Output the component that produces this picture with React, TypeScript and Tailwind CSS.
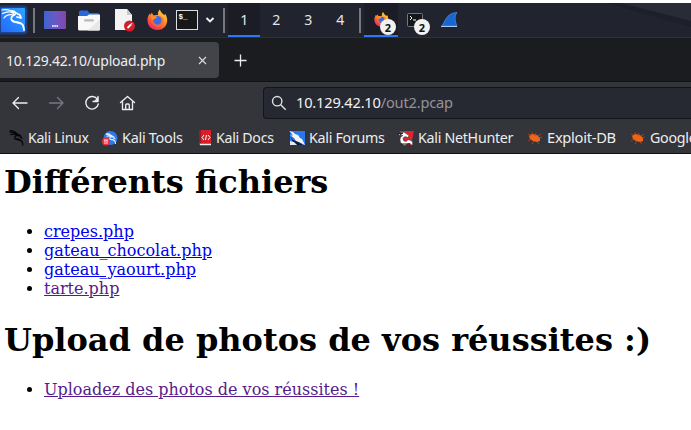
import React from "react";

type IconProps = { className?: string };

const dragonStrokes = (
  <>
    <path d="M2 3c5 0 9 1 12 4-4-1-7 0-10 1 4-2 8-1 11 1-3 1-5 4-3 6 3 2 8 0 11 4 2 2 2 4 2 7" />
    <path d="M3 1c5 0 9 1 12 5l5 3-4 1M20 9l3 4-3-1M14 15c5 0 7 1 9 4" />
  </>
);

function KaliMenu() {
  return (
    <svg className="h-[30px] w-[30px] shrink-0" viewBox="0 0 30 30">
      <defs>
        <linearGradient id="menuBlue" x1="0" y1="1" x2="1" y2="0">
          <stop stopColor="#2369ff" />
          <stop offset="1" stopColor="#2ba5ff" />
        </linearGradient>
      </defs>
      <rect x="-2" y="0" width="30" height="30" rx="4" fill="#1d58c8" opacity=".25" />
      <rect x="-1" y="1.5" width="28" height="27" rx="3" fill="#1d58c8" opacity=".5" />
      <rect x="1" y="3" width="24" height="24" rx="1" fill="url(#menuBlue)" />
      <g fill="none" stroke="#fff" strokeLinecap="round" strokeLinejoin="round">
        <path d="M2 5c5-1 9 0 12 3M2.500 8.500c4-2 8-2 11 0M4 13c2-3 6-4 10-3" strokeWidth="1.2" />
        <path d="M12 6c2 0 3 1 4 2l4 2 1 3-4-1M15 9.500c-3 1-5 4-3 6 3 3 8 1 10.500 4 1 2 1.500 3 1.500 5.500" strokeWidth="1.8" />
        <path d="M14 16.500c4 0 7 1 9 3.500" strokeWidth="1" />
      </g>
    </svg>
  );
}

function Desktop() {
  return (
    <svg className="h-[18px] w-[22px] shrink-0" viewBox="0 0 22 18">
      <defs>
        <linearGradient id="desk">
          <stop stopColor="#3f65cf" />
          <stop offset=".55" stopColor="#6b58c5" />
          <stop offset="1" stopColor="#8545a9" />
        </linearGradient>
      </defs>
      <rect width="22" height="18" rx=".7" fill="url(#desk)" />
      <path d="M8 15h1.7M10.2 15h1.7M12.4 15h1.7" stroke="#fff" strokeWidth="1.4" />
    </svg>
  );
}

function Folder() {
  return (
    <svg className="h-[21px] w-[22px] shrink-0" viewBox="0 0 22 21">
      <path d="M1 2q0-1.5 1.5-1.5h7L11.5 3H20q1 0 1 1v6H1z" fill="#286ad9" />
      <path d="M0 6h9l2-1.5h11V19q0 1.5-1.5 1.5h-19Q0 20.500 0 19z" fill="#f8f8f8" />
      <path d="M22 9v10q0 1.500-1.500 1.500H10z" fill="#e7e7e7" />
      <rect x="6" y="9.300" width="10" height="2.200" rx="1.100" fill="#b9b9b9" />
    </svg>
  );
}

function Editor() {
  return (
    <svg className="h-[24px] w-[22px] shrink-0" viewBox="0 0 22 24">
      <path d="M1 1h12l5 6v15H1z" fill="#f3f3f3" />
      <path d="M13 1v6h5z" fill="#c9c9c9" />
      <circle cx="15.500" cy="18" r="5.500" fill="#d51e29" />
      <path d="M13.500 20l3.500-3.500" stroke="#fff" strokeWidth="1.800" />
      <path d="M17.300 16.200l.8-.8" stroke="#fff" strokeWidth="1.300" />
    </svg>
  );
}

function Firefox({ className = "" }: IconProps) {
  return (
    <svg className={className} viewBox="0 0 22 22">
      <defs>
        <linearGradient id="flame" x1=".85" y1="0" x2=".2" y2="1">
          <stop stopColor="#ffe34a" />
          <stop offset=".4" stopColor="#ff9928" />
          <stop offset=".75" stopColor="#fc4740" />
          <stop offset="1" stopColor="#e22c6e" />
        </linearGradient>
      </defs>
      <path d="M13.500 0c.5 3 3 4 4.500 6l1-1.500c2 3 2.700 6.500 1.800 9.500C19.500 19 16 21.500 11 21.500 4.500 21.500.5 17 .5 11c0-3 1-5 2.500-7v2L5 3.500l2 3c2-.8 3-.8 4.500-.4-.4-2.500.3-4.500 2-6.100z" fill="url(#flame)" />
      <circle cx="10.800" cy="11.800" r="4.900" fill="#4b62df" />
      <path d="M3 7c3-2 5 0 8 1-1 2-4 1.500-4.500 3 1.500 4 6 3.500 8 1 1-2 0-4-1.200-5.500 4 1 5.500 5 3.700 8-2 4-7 5-10 2C4 14 4 10 3 7z" fill="#ff6c2e" opacity=".72" />
      <circle cx="11" cy="12" r="3.600" fill="#386de5" />
      <path d="M3 6c3-1 5 .500 8 2l-3 2-2 1z" fill="#ff8b27" />
    </svg>
  );
}

function Terminal({ className = "" }: IconProps) {
  return (
    <svg className={className} viewBox="0 0 22 20">
      <rect x=".5" y=".5" width="21" height="19" fill="#171819" stroke="#dedede" />
      <text x="2.500" y="8.500" fill="#fff" fontFamily="Liberation Mono, monospace" fontWeight="700" fontSize="7.500">$_</text>
    </svg>
  );
}

function SmallTerminal() {
  return (
    <svg className="absolute left-0 top-[10px] h-[14px] w-[16px]" viewBox="0 0 16 14">
      <rect x=".5" y=".5" width="15" height="13" rx="1" fill="#151619" stroke="#74767c" />
      <path d="M3 3l2 2-2 2M6 7h3" fill="none" stroke="#fff" />
    </svg>
  );
}

function Fin() {
  return (
    <svg className="ml-[10px] h-[16px] w-[17px] shrink-0" viewBox="0 0 17 16">
      <path d="M.5 14C4 12 4 1 16 .5c-3 4-2 9 0 13.500z" fill="#1766d2" stroke="#4b97e8" strokeWidth=".7" />
      <path d="M0 14.500h16" stroke="#a8c9ef" />
    </svg>
  );
}

function Badge({ className = "" }: IconProps) {
  return (
    <span className={`absolute top-[16px] flex h-4 w-4 items-center justify-center rounded-full bg-[#f1f1f1] text-[11px] leading-none font-bold text-[#111] ${className}`}>
      2
    </span>
  );
}

function Separator({ className = "" }: IconProps) {
  return <div className={`h-[25px] w-[2px] shrink-0 bg-[#77787c] ${className}`} />;
}

function Taskbar() {
  return (
    <div className="relative flex h-[34px] shrink-0 items-center bg-[#21232f]">
      <svg className="absolute right-0 top-0 h-[24px] w-[84px]" viewBox="0 0 84 24">
        <path d="M0 0h14l70 18v6z" fill="#1d1f29" />
        <path d="M14 0h70v18z" fill="#292b36" />
      </svg>
      <KaliMenu />
      <Separator className="ml-[3px]" />
      <div className="ml-[9px] flex"><Desktop /></div>
      <div className="ml-3 flex"><Folder /></div>
      <div className="ml-[14px] flex"><Editor /></div>
      <Firefox className="ml-[11px] h-[22px] w-[21px] shrink-0" />
      <Terminal className="ml-2 h-5 w-[22px] shrink-0" />
      <svg className="ml-[7px] h-[8px] w-[10px] shrink-0" viewBox="0 0 10 8">
        <path d="M1.500 2l3.500 3.500L8.500 2" fill="none" stroke="#f1f1f1" strokeWidth="1.900" />
      </svg>
      <Separator className="ml-2" />
      <div className="ml-[3px] flex h-full shrink-0 text-[15px] text-[#e5e5e9]">
        {["1", "2", "3", "4"].map((n, i) => (
          <div key={n} className={`flex w-8 items-center justify-center ${i === 0 ? "border-b-2 border-[#2878f7] bg-[#1b1c26]" : "pb-[2px]"}`}>
            <span className="inline-block scale-x-[0.94]">{n}</span>
          </div>
        ))}
      </div>
      <Separator className="ml-[3px]" />
      <div className="relative ml-[3px] h-full w-[34px] shrink-0 border-b-2 border-[#2878f7] bg-[#1b1c26]">
        <Firefox className="absolute left-[10px] top-[9px] h-[15px] w-[15px]" />
        <Badge className="left-4" />
      </div>
      <div className="relative ml-[9px] h-full w-[24px] shrink-0">
        <SmallTerminal />
        <Badge className="left-[7px]" />
      </div>
      <Fin />
    </div>
  );
}

function Tabs() {
  return (
    <div className="flex h-[44px] shrink-0 border-t border-[#303137] bg-[#1b1c20] pt-[4px]">
      <div className="flex h-9 w-[219px] items-center rounded-r bg-[#42444a] pl-[6px] text-[15px] text-[#ededee]">
        <span className="w-[160px] origin-left scale-x-[0.93] whitespace-nowrap tracking-[-0.2px]">10.129.42.10/upload.php</span>
        <svg className="ml-[32px] h-[9px] w-[9px]" viewBox="0 0 9 9">
          <path d="M1 1l7 7M8 1L1 8" stroke="#ddd" strokeWidth="1.100" />
        </svg>
      </div>
      <svg className="ml-[15px] mt-[12px] h-[13px] w-[13px]" viewBox="0 0 13 13">
        <path d="M6.500.5v12M.5 6.500h12" stroke="#ececec" strokeWidth="1.300" />
      </svg>
    </div>
  );
}

function AddressBar() {
  return (
    <div className="flex h-[42px] shrink-0 items-center border-t border-[#111217] bg-[#33353b]">
      <svg className="h-[18px] w-[140px] shrink-0" viewBox="0 0 140 18" fill="none" strokeLinecap="round" strokeLinejoin="round" strokeWidth="1.350">
        <path d="M27 9H13.500M18.500 3.500L13 9l5.500 5.500" stroke="#ededee" />
        <path d="M49.500 9H62.500M57.500 3.500L63 9l-5.500 5.500" stroke="#777980" />
        <path d="M97.500 5.500A6.300 6.300 0 1 0 98.300 10M98 2.500v5h-5" stroke="#ededee" />
        <path d="M94.500 7l3.500-3.500V7z" fill="#ededee" stroke="#ededee" strokeWidth=".6" />
        <path d="M120.500 8.500l7-6 7 6M122.500 7.500v8h10v-8M125.700 15v-4q0-1 1-1h1.600q1 0 1 1v4" stroke="#ededee" />
      </svg>
      <div className="ml-[123px] flex h-8 flex-1 items-center rounded-l border-y border-l border-[#14151b] bg-[#272932] pl-[7px] text-[15px]">
        <svg className="h-[16px] w-[16px]" viewBox="0 0 16 16" fill="none" stroke="#e2e2e5" strokeWidth="1.400">
          <circle cx="6.200" cy="6.200" r="4.700" /><path d="M9.700 9.700l5 5" />
        </svg>
        <span className="ml-[9px] origin-left scale-x-[0.975] whitespace-nowrap tracking-[-0.2px] text-[#f1f1f2]">10.129.42.10<span className="text-[#93949a]">/out2.pcap</span></span>
      </div>
    </div>
  );
}

type BookmarkKind = "linux" | "tools" | "docs" | "forums" | "hunter" | "exploit";

function BookmarkIcon({ kind }: { kind: BookmarkKind }) {
  if (kind === "linux") return (
    <svg className="h-4 w-4 shrink-0" viewBox="0 0 27 27" fill="none" stroke="#050607" strokeWidth="2.200">{dragonStrokes}</svg>
  );
  if (kind === "tools") return (
    <svg className="h-4 w-4 shrink-0" viewBox="0 0 16 16">
      <circle cx="8.500" cy="8" r="7" fill="#287af4" />
      <g transform="translate(3 3) scale(.42)" fill="none" stroke="#e5f2ff" strokeWidth="2.500">{dragonStrokes}</g>
      <circle cx="4" cy="11.500" r="4" fill="#ed303c" />
      <path d="M2 10h4M3 10v4M5 10v4" stroke="#fff" strokeWidth=".8" />
    </svg>
  );
  if (kind === "docs") return (
    <svg className="ml-px h-4 w-[13px] shrink-0" viewBox="0 0 13 16">
      <path d="M0 0h12v15H0z" fill="#d51f29" /><path d="M0 0h2v13H0z" fill="#991a27" /><path d="M1 14.500h11" stroke="#eee" strokeWidth="1.500" />
      <path d="M5 5L3 7.500 5 10M9 5l2 2.500L9 10M7.500 5l-1 5" fill="none" stroke="#fff" />
    </svg>
  );
  if (kind === "forums") return (
    <svg className="h-4 w-4 shrink-0" viewBox="0 0 16 16">
      <path d="M1 1h15v14H1z" fill="#2678f0" />
      <path d="M0 1l4 1 2 2 3 1 2 3 2 1 3 6-6-3-3-1-2-3-4-3 3 1-2-3 3 2z" fill="#f6f6f6" />
      <path d="M1 6l3 4 5 2 5 3H8l-4-3z" fill="#121827" />
      <path d="M1 11l4 1 3 3H1z" fill="#e3e9ef" />
    </svg>
  );
  if (kind === "hunter") return (
    <svg className="h-4 w-4 shrink-0" viewBox="0 0 16 16">
      <path d="M2 1h14L13 15H6z" fill="#df242e" />
      <path d="M0 5q4-5 8-1.500l3 2-1 2q-4-2-5 1 0 3 3 3 2-3 5-1 3 2 1 5-2-3-4-2l-3 2q-5-1-5-6 0-3 3-4z" fill="#fff" stroke="#282b33" strokeWidth=".5" />
      <path d="M0 4l5-1-3 2M3 14h9" stroke="#17191f" fill="none" />
    </svg>
  );
  return (
    <svg className="h-4 w-4 shrink-0" viewBox="0 0 16 16">
      <path d="M2 6q1-2 4-2l4 1 3 3v3l-3 1-4-1-3-2z" fill="#ef6418" />
      <path d="M1 4l3 2M5 2l1 3M9 3l-1 3M11 6l3-2M12 8l3-1M4 9l-3 2M7 11l-2 3M10 12l2 2" stroke="#b84a16" strokeWidth=".8" />
    </svg>
  );
}

const bookmarks: { label: string; kind: BookmarkKind; width: string; scale: string }[] = [
  { label: "Kali Linux", kind: "linux", width: "w-[94px]", scale: "scale-x-[0.94]" },
  { label: "Kali Tools", kind: "tools", width: "w-[96px]", scale: "scale-x-[0.965]" },
  { label: "Kali Docs", kind: "docs", width: "w-[91px]", scale: "scale-x-[0.945]" },
  { label: "Kali Forums", kind: "forums", width: "w-[109px]", scale: "scale-x-[0.95]" },
  { label: "Kali NetHunter", kind: "hunter", width: "w-[129px]", scale: "scale-x-[0.95]" },
  { label: "Exploit-DB", kind: "exploit", width: "w-[103px]", scale: "scale-x-[0.98]" },
  { label: "Google Hacking DB", kind: "exploit", width: "w-[180px]", scale: "scale-x-[0.95]" },
];

function Bookmarks() {
  return (
    <div className="flex h-[31px] shrink-0 overflow-hidden border-b border-[#101116] bg-[#33353b] pl-2 pb-px text-[15px] text-[#ededee]">
      {bookmarks.map((b) => (
        <div key={b.label} className={`flex shrink-0 items-center whitespace-nowrap ${b.width}`}>
          <BookmarkIcon kind={b.kind} />
          <span className={`ml-1 origin-left tracking-[-0.3px] ${b.scale}`}>{b.label}</span>
        </div>
      ))}
    </div>
  );
}

const files = [
  { name: "crepes.php", visited: false },
  { name: "gateau_chocolat.php", visited: false },
  { name: "gateau_yaourt.php", visited: false },
  { name: "tarte.php", visited: true },
];

export default function App() {
  return (
    <div className="flex h-[430px] w-[691px] flex-col overflow-hidden bg-white pt-[3px] font-['Noto_Sans',sans-serif]">
      <Taskbar />
      <Tabs />
      <AddressBar />
      <Bookmarks />
      <main className="px-1 pt-[10px] font-['DejaVu_Serif',serif] text-[16px] leading-[19px] text-black">
        <h1 className="whitespace-nowrap text-[32px] leading-[37px] font-bold">Différents fichiers</h1>
        <ul className="mt-[21px] list-disc pl-10">
          {files.map((f) => (
            <li key={f.name}><a href="#" className={`underline ${f.visited ? "text-[#551a8b]" : "text-[#0000ee]"}`}>{f.name}</a></li>
          ))}
        </ul>
        <h1 className="mt-6 whitespace-nowrap text-[32px] leading-[37px] font-bold">Upload de photos de vos réussites :)</h1>
        <ul className="mt-[21px] list-disc pl-10">
          <li><a href="#" className="text-[#551a8b] underline">Uploadez des photos de vos réussites !</a></li>
        </ul>
      </main>
    </div>
  );
}
